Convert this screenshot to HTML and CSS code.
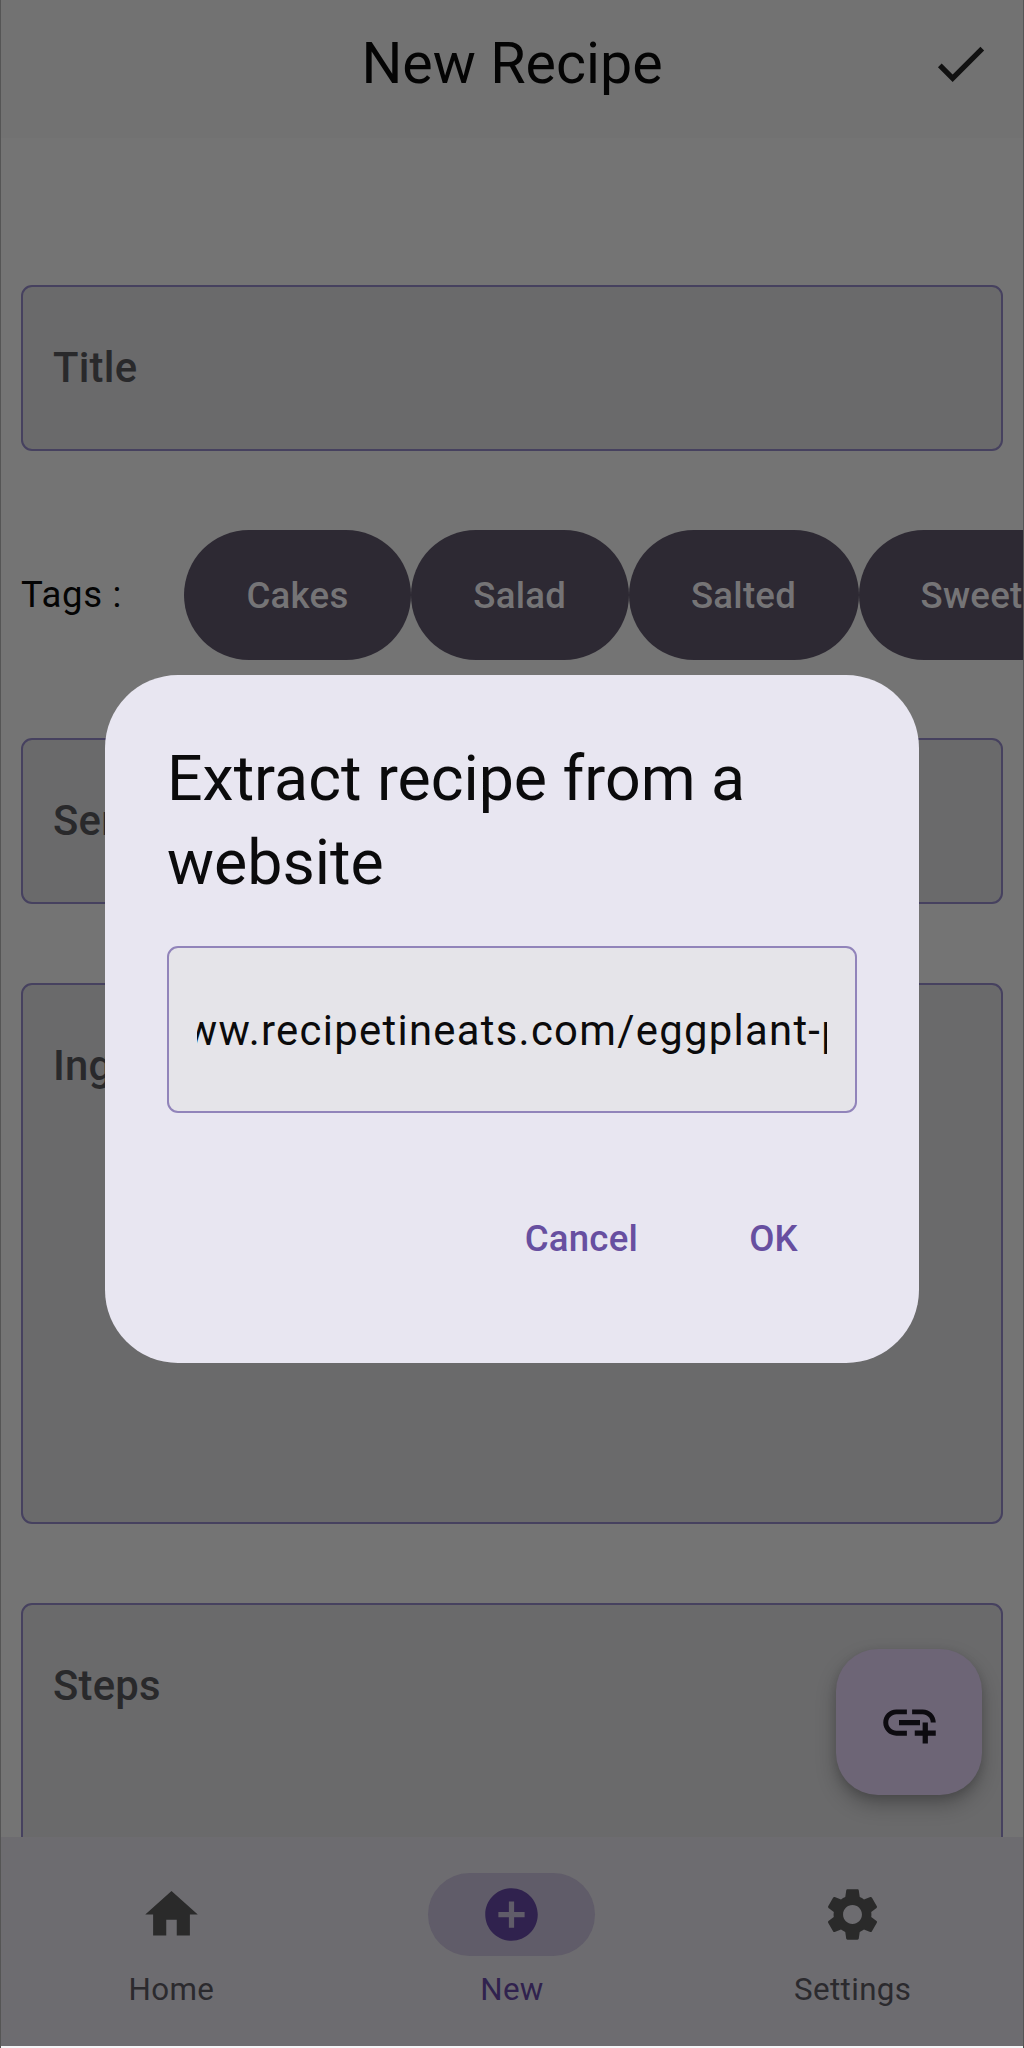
FILE: index.html
```html
<!DOCTYPE html>
<html lang="en">
<head>
<meta charset="utf-8">
<title>New Recipe</title>
<link rel="stylesheet" href="styles.css">
</head>
<body>
<div class="app">
  <header class="bar">
    <h1 class="bar-title">New Recipe</h1>
    <svg class="icon check" viewBox="0 0 24 24"><path d="M9 16.17 4.83 12l-1.42 1.41L9 19 21 7l-1.41-1.41z"/></svg>
  </header>
  <main class="form">
    <div class="field">Title</div>
    <div class="tags">
      <span class="tags-label">Tags :</span>
      <span class="chip cakes">Cakes</span><span class="chip salad">Salad</span><span class="chip salted">Salted</span><span class="chip sweet">Sweet</span>
    </div>
    <div class="field">Servings</div>
    <div class="field ingredients">Ingredients</div>
    <div class="field steps">Steps</div>
  </main>
  <nav class="nav">
    <div class="nav-item">
      <span class="pill"><svg class="icon" viewBox="0 0 24 24"><path d="M10 20v-6h4v6h5v-8h3L12 3 2 12h3v8z"/></svg></span>
      <span>Home</span>
    </div>
    <div class="nav-item active">
      <span class="pill"><svg class="icon" viewBox="0 0 24 24"><path d="M12 2C6.48 2 2 6.48 2 12s4.48 10 10 10 10-4.48 10-10S17.52 2 12 2zm5 11h-4v4h-2v-4H7v-2h4V7h2v4h4v2z"/></svg></span>
      <span>New</span>
    </div>
    <div class="nav-item">
      <span class="pill"><svg class="icon" viewBox="0 0 24 24"><path d="M19.14 12.94c.04-.3.06-.61.06-.94 0-.32-.02-.64-.07-.94l2.03-1.58c.18-.14.23-.41.12-.61l-1.92-3.32c-.12-.22-.37-.29-.59-.22l-2.39.96c-.5-.38-1.03-.7-1.62-.94l-.36-2.54c-.04-.24-.24-.41-.48-.41h-3.84c-.24 0-.43.17-.47.41l-.36 2.54c-.59.24-1.13.57-1.62.94l-2.39-.96c-.22-.08-.47 0-.59.22L2.74 8.87c-.12.21-.08.47.12.61l2.03 1.58c-.05.3-.09.63-.09.94s.02.64.07.94l-2.03 1.58c-.18.14-.23.41-.12.61l1.92 3.32c.12.22.37.29.59.22l2.39-.96c.5.38 1.03.7 1.62.94l.36 2.54c.05.24.24.41.48.41h3.84c.24 0 .44-.17.47-.41l.36-2.54c.59-.24 1.13-.56 1.62-.94l2.39.96c.22.08.47 0 .59-.22l1.92-3.32c.12-.22.07-.47-.12-.61l-2.01-1.58zM12 15.6c-1.98 0-3.6-1.62-3.6-3.6s1.62-3.6 3.6-3.6 3.6 1.62 3.6 3.6-1.62 3.6-3.6 3.6z"/></svg></span>
      <span>Settings</span>
    </div>
  </nav>
  <div class="fab"><svg class="icon" viewBox="0 0 24 24"><path d="M8 11h8v2H8zM20.1 12H22c0-2.76-2.24-5-5-5h-4v1.9h4c1.71 0 3.1 1.39 3.1 3.1zM3.9 12c0-1.71 1.39-3.1 3.1-3.1h4V7H7c-2.76 0-5 2.24-5 5s2.24 5 5 5h4v-1.9H7c-1.71 0-3.1-1.39-3.1-3.1zM19 12h-2v3h-3v2h3v3h2v-3h3v-2h-3z"/></svg></div>
  <section class="dialog">
    <h2 class="dialog-title">Extract recipe from a website</h2>
    <div class="url-field"><div class="url-view"><span class="url">www.recipetineats.com/eggplant-p</span></div></div>
    <div class="actions"><span>Cancel</span><span>OK</span></div>
  </section>
</div>
</body>
</html>
```
FILE: styles.css
```css
* { box-sizing: border-box; }
body { margin: 0; font-family: Roboto, sans-serif; }
.app {
  position: relative;
  width: 1024px;
  height: 2048px;
  overflow: hidden;
  display: flex;
  flex-direction: column;
  background: #747474;
  border: 1px solid #555;
  border-width: 0 1px;
}
.icon { width: 63px; height: 63px; fill: currentColor; display: block; flex: none; }
.bar {
  height: 138px;
  flex: none;
  display: grid;
  grid-template-columns: 1fr auto 1fr;
  align-items: center;
  padding: 0 31px 11px;
  background: #727272;
  color: #040404;
}
.bar-title { grid-column: 2; margin: 0; font-size: 57.4px; font-weight: 400; }
.check { justify-self: end; color: #111; }
.form {
  flex: 1;
  min-height: 0;
  overflow: hidden;
  display: flex;
  flex-direction: column;
  gap: 78px;
  padding: 147px 20px 0;
}
.field {
  height: 166px;
  flex: none;
  padding: 0 30px;
  border: 2px solid #46415f;
  border-radius: 11px;
  background: #6a6a6b;
  color: #29292b;
  font-size: 41.8px;
  font-weight: 500;
  line-height: 161px;
  letter-spacing: .25px;
}
.ingredients { height: 541px; margin-top: 1px; }
.steps { height: 300px; margin-top: 1px; }
.tags { height: 131px; flex: none; display: flex; align-items: center; color: #040404; }
.tags-label { width: 163px; flex: none; font-size: 36.6px; letter-spacing: .65px; }
.chip {
  height: 130px;
  flex: none;
  border-radius: 66px;
  background: #2d2933;
  color: #757476;
  font-size: 36.6px;
  font-weight: 500;
  line-height: 132px;
  text-align: center;
  letter-spacing: .26px;
}
.cakes { width: 227px; }
.salad { width: 217.5px; }
.salted { width: 230px; }
.sweet { width: 226px; }
.nav {
  height: 211px;
  flex: none;
  display: grid;
  grid-template-columns: repeat(3, 1fr);
  padding-top: 36px;
  background: #6d6c70;
  border-bottom: 2px solid #f4f4f6;
  color: #2b2a2e;
  font-size: 31.3px;
}
.nav-item { display: flex; flex-direction: column; align-items: center; gap: 15px; letter-spacing: .35px; }
.nav-item .icon { color: #2a2a2a; }
.pill { width: 167px; height: 83px; display: flex; align-items: center; justify-content: center; border-radius: 42px; }
.active { color: #30224e; }
.active .pill { background: #605c69; }
.active .icon { color: #30224e; }
.fab {
  position: absolute;
  left: 835px;
  top: 1649px;
  width: 146px;
  height: 146px;
  display: flex;
  align-items: center;
  justify-content: center;
  border-radius: 42px;
  background: #6d6576;
  color: #0d0b10;
  box-shadow: 0 10px 20px rgba(0, 0, 0, .25), 0 3px 8px rgba(0, 0, 0, .12);
}
.dialog {
  position: absolute;
  left: 104px;
  top: 675px;
  width: 814px;
  height: 688px;
  padding: 62px;
  border-radius: 73px;
  background: #e8e6f1;
  display: flex;
  flex-direction: column;
  color: #0b0b0c;
}
.dialog-title { margin: 0; font-size: 62.6px; font-weight: 400; line-height: 83.5px; }
.url-field {
  height: 167px;
  margin-top: 42px;
  padding: 0 28px;
  border: 2px solid #9184ba;
  border-radius: 11px;
  background: #e5e4e9;
}
.url-view { height: 163px; overflow: hidden; display: flex; justify-content: flex-end; }
.url { font-size: 41.8px; line-height: 166px; letter-spacing: 1.3px; white-space: nowrap; margin-right: -19px; }
.actions {
  display: flex;
  justify-content: flex-end;
  gap: 111px;
  margin-top: 104px;
  padding-right: 59px;
  color: #674fa0;
  font-size: 36.6px;
  font-weight: 500;
  line-height: 44px;
  letter-spacing: .26px;
}
```
